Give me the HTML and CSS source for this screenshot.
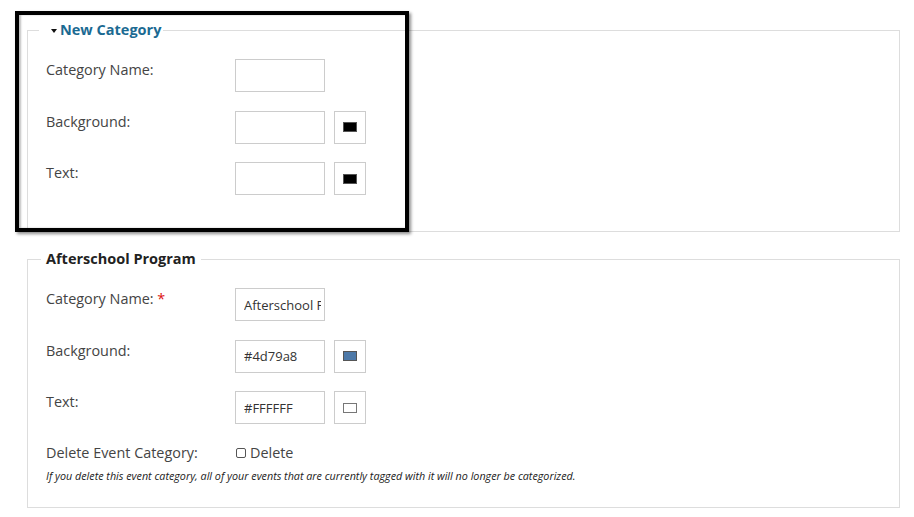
FILE: index.html
```html
<!DOCTYPE html>
<html lang="en">
<head>
  <meta charset="UTF-8">
  <title>Event Categories</title>
  <link rel="stylesheet" href="styles.css">
</head>
<body>
  <div class="page">
    <fieldset class="category">
      <legend class="toggle"><span class="caret"></span>New Category</legend>
      <div class="rows">
        <label for="new_name">Category Name:</label>
        <div class="field"><input type="text" id="new_name"></div>
        <label for="new_bg">Background:</label>
        <div class="field">
          <input type="text" id="new_bg">
          <span class="picker"><span class="swatch" style="background:#000"></span></span>
        </div>
        <label for="new_fg">Text:</label>
        <div class="field">
          <input type="text" id="new_fg">
          <span class="picker"><span class="swatch" style="background:#000"></span></span>
        </div>
      </div>
    </fieldset>
    <div class="highlight"></div>

    <fieldset class="category existing">
      <legend>Afterschool Program</legend>
      <div class="rows">
        <label for="cat_name">Category Name: <span class="req">*</span></label>
        <div class="field"><input type="text" id="cat_name" value="Afterschool Program"></div>
        <label for="cat_bg">Background:</label>
        <div class="field">
          <input type="text" id="cat_bg" value="#4d79a8">
          <span class="picker"><span class="swatch" style="background:#4d79a8"></span></span>
        </div>
        <label for="cat_fg">Text:</label>
        <div class="field">
          <input type="text" id="cat_fg" value="#FFFFFF">
          <span class="picker"><span class="swatch swatch-light" style="background:#fff"></span></span>
        </div>
        <label class="delete-label">Delete Event Category:</label>
        <div class="field delete-field">
          <label class="check"><span class="box"></span>Delete</label>
        </div>
      </div>
      <p class="note">If you delete this event category, all of your events that are currently tagged with it will no longer be categorized.</p>
    </fieldset>
  </div>
</body>
</html>
```

FILE: styles.css
```css
body {
  margin: 0;
  font-family: "Open Sans", sans-serif;
  font-size: 14.4px;
  color: #444;
  background: #fff;
}
.page {
  position: relative;
  padding: 20px 14px 0 27px;
}
fieldset.category {
  margin: 0 0 17px 0;
  padding: 0 18px 36px 18px;
  border: 1px solid #ddd;
  min-width: 0;
}
fieldset.existing {
  padding-bottom: 24px;
}
fieldset.category legend {
  margin-left: -5px;
  padding: 0 5px;
  font-size: 14.5px;
  line-height: 20px;
  font-weight: 700;
  color: #222;
}
fieldset.category legend.toggle {
  color: #1b6a92;
  padding-left: 12px;
  padding-right: 2px;
  margin-left: -7px;
  cursor: pointer;
}
.caret {
  display: inline-block;
  width: 0;
  height: 0;
  margin-right: 3px;
  vertical-align: middle;
  border-left: 3.5px solid transparent;
  border-right: 3.5px solid transparent;
  border-top: 4px solid #111;
}
.rows {
  display: grid;
  grid-template-columns: 189px 1fr;
  row-gap: 18.5px;
  padding-top: 19px;
  align-items: start;
}
.rows > label {
  padding-top: 1px;
  line-height: 20px;
}
.req {
  color: #d11;
}
.field {
  display: flex;
  gap: 9px;
}
.field input {
  box-sizing: border-box;
  width: 90px;
  height: 33px;
  margin: 0;
  padding: 0 3px 0 8px;
  border: 1px solid #ccc;
  font-family: "Open Sans", sans-serif;
  font-size: 13px;
  color: #333;
  outline: none;
}
.picker {
  box-sizing: border-box;
  width: 32px;
  height: 33px;
  border: 1px solid #ccc;
  display: flex;
  align-items: center;
  justify-content: center;
}
.swatch {
  box-sizing: border-box;
  width: 14px;
  height: 10px;
  border: 1px solid #555;
}
.swatch-light {
  border-color: #777;
}
.rows > label.delete-label {
  padding-top: 0;
}
.check {
  display: flex;
  align-items: center;
  line-height: 20px;
  color: #444;
}
.box {
  box-sizing: border-box;
  width: 10px;
  height: 10px;
  border: 1px solid #555;
  border-radius: 2px;
  margin: 1px 4px 0 1px;
}
.note {
  margin: 6px 0 0 0;
  font-size: 10.75px;
  font-style: italic;
  color: #222;
}
.highlight {
  position: absolute;
  left: 15px;
  top: 11px;
  width: 394px;
  height: 221px;
  box-sizing: border-box;
  border: 4px solid #000;
  box-shadow: 2px 2px 3px rgba(0, 0, 0, 0.45), inset 2px 0 2px rgba(0, 0, 0, 0.25);
  pointer-events: none;
}
```
